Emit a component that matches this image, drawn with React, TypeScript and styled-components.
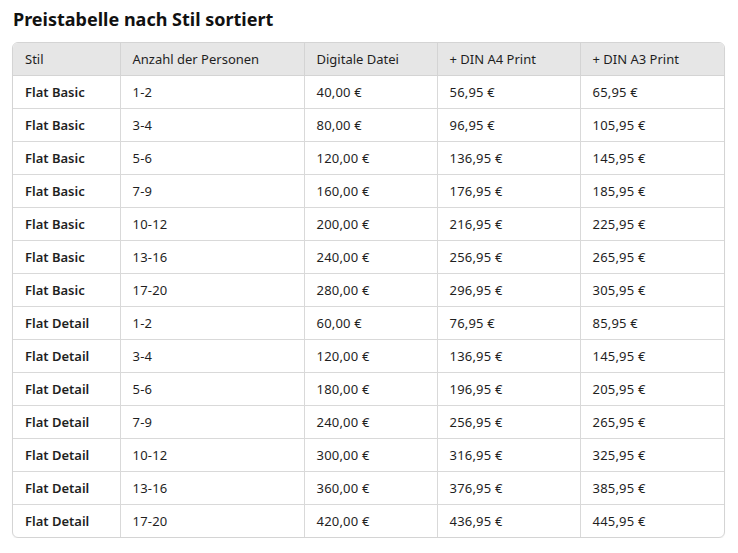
import React from "react";
import styled, { createGlobalStyle } from "styled-components";

const Global = createGlobalStyle`
  html, body { margin: 0; padding: 0; background: #ffffff; }
  body { font-family: "Noto Sans", "Open Sans", sans-serif; color: #1f1f1f; }
`;

const Page = styled.div`
  padding: 6px 13px 0 12px;
  width: 713px;
`;

const Title = styled.h2`
  margin: 0 0 10px 1px;
  font-size: 18px;
  line-height: 26px;
  font-weight: 700;
  color: #111;
  letter-spacing: 0;
`;

const Frame = styled.div`
  border: 1px solid #d4d4d4;
  border-radius: 6px;
  overflow: hidden;
  box-shadow: 0 1px 1px rgba(0, 0, 0, 0.05);
`;

const Table = styled.table`
  width: 100%;
  border-collapse: collapse;
  table-layout: fixed;
  font-size: 13px;
`;

const HeadCell = styled.th`
  background: #e6e6e6;
  font-weight: 400;
  text-align: left;
  height: 32px;
  padding: 0 12px;
  border-bottom: 1px solid #d4d4d4;
  border-left: 1px solid #d4d4d4;
  &:first-child { border-left: none; }
  color: #1f1f1f;
`;

const Cell = styled.td<{ $bold?: boolean }>`
  height: 32px;
  padding: 0 12px;
  font-weight: ${(p) => (p.$bold ? 600 : 400)};
  letter-spacing: ${(p) => (p.$bold ? "0" : "0.2px")};
  border-top: 1px solid #d9d9d9;
  border-left: 1px solid #d9d9d9;
  &:first-child { border-left: none; }
  tr:first-child > & { border-top: none; }
  color: #1f1f1f;
  white-space: nowrap;
`;

const widths = [107, 184, 133, 143, 145];

const rows: [string, string, string, string, string][] = [
  ["Flat Basic", "1-2", "40,00 €", "56,95 €", "65,95 €"],
  ["Flat Basic", "3-4", "80,00 €", "96,95 €", "105,95 €"],
  ["Flat Basic", "5-6", "120,00 €", "136,95 €", "145,95 €"],
  ["Flat Basic", "7-9", "160,00 €", "176,95 €", "185,95 €"],
  ["Flat Basic", "10-12", "200,00 €", "216,95 €", "225,95 €"],
  ["Flat Basic", "13-16", "240,00 €", "256,95 €", "265,95 €"],
  ["Flat Basic", "17-20", "280,00 €", "296,95 €", "305,95 €"],
  ["Flat Detail", "1-2", "60,00 €", "76,95 €", "85,95 €"],
  ["Flat Detail", "3-4", "120,00 €", "136,95 €", "145,95 €"],
  ["Flat Detail", "5-6", "180,00 €", "196,95 €", "205,95 €"],
  ["Flat Detail", "7-9", "240,00 €", "256,95 €", "265,95 €"],
  ["Flat Detail", "10-12", "300,00 €", "316,95 €", "325,95 €"],
  ["Flat Detail", "13-16", "360,00 €", "376,95 €", "385,95 €"],
  ["Flat Detail", "17-20", "420,00 €", "436,95 €", "445,95 €"],
];

const headers = ["Stil", "Anzahl der Personen", "Digitale Datei", "+ DIN A4 Print", "+ DIN A3 Print"];

export default function App() {
  return (
    <>
      <Global />
      <Page>
        <Title>Preistabelle nach Stil sortiert</Title>
        <Frame>
          <Table>
            <colgroup>
              {widths.map((w, i) => (
                <col key={i} style={{ width: w }} />
              ))}
            </colgroup>
            <thead>
              <tr>
                {headers.map((h) => (
                  <HeadCell key={h}>{h}</HeadCell>
                ))}
              </tr>
            </thead>
            <tbody>
              {rows.map((r, i) => (
                <tr key={i}>
                  {r.map((c, j) => (
                    <Cell key={j} $bold={j === 0}>
                      {c}
                    </Cell>
                  ))}
                </tr>
              ))}
            </tbody>
          </Table>
        </Frame>
      </Page>
    </>
  );
}
